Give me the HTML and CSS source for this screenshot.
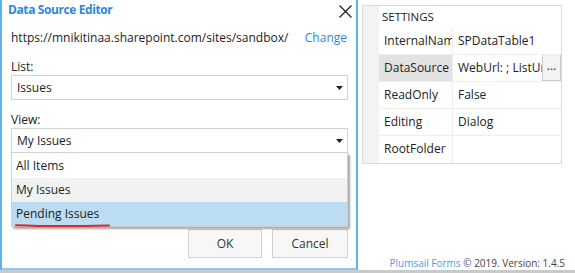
FILE: index.html
```html
<!DOCTYPE html>
<html>
<head>
<meta charset="utf-8">
<link rel="stylesheet" href="styles.css">
</head>
<body>
<div class="screen">
  <div class="main">
    <div class="dialog">
      <div class="titlebar">
        <span class="title">Data Source Editor</span>
        <svg class="close" width="13" height="13" viewBox="0 0 13 13"><path d="M0.5 0.5 L12.5 12.5 M12.5 0.5 L0.5 12.5" stroke="#222" stroke-width="1.3" fill="none"/></svg>
      </div>
      <div class="url-row">
        <span class="url">https://mnikitinaa.sharepoint.com/sites/sandbox/</span>
        <span class="change">Change</span>
      </div>
      <div class="field">
        <div class="label">List:</div>
        <div class="select"><span>Issues</span><svg class="caret" width="7" height="4" viewBox="0 0 7 4"><path d="M0 0 H7 L3.5 4 Z" fill="#222"/></svg></div>
      </div>
      <div class="field">
        <div class="label">View:</div>
        <div class="select"><span>My Issues</span><svg class="caret" width="7" height="4" viewBox="0 0 7 4"><path d="M0 0 H7 L3.5 4 Z" fill="#222"/></svg></div>
        <div class="dropdown">
          <div class="item">All Items</div>
          <div class="item hover">My Issues</div>
          <div class="item selected">Pending Issues</div>
          <svg class="underline" width="96" height="5" viewBox="0 0 96 5"><path d="M1 2.2 Q40 3.8 94 2.4" stroke="#e0262b" stroke-width="2" fill="none" stroke-linecap="round"/></svg>
        </div>
      </div>
      <div class="buttons">
        <div class="btn ok">OK</div>
        <div class="btn cancel">Cancel</div>
      </div>
    </div>
    <div class="side">
      <div class="settings">
        <div class="gutter"></div>
        <div class="grid">
          <div class="header">SETTINGS</div>
          <div class="row"><div class="name">InternalName</div><div class="value">SPDataTable1</div></div>
          <div class="row"><div class="name active">DataSource</div><div class="value"><span class="clip">WebUrl: ; ListUrl</span><span class="more">...</span></div></div>
          <div class="row"><div class="name">ReadOnly</div><div class="value">False</div></div>
          <div class="row"><div class="name">Editing</div><div class="value">Dialog</div></div>
          <div class="row last"><div class="name">RootFolder</div><div class="value"></div></div>
        </div>
      </div>
      <div class="footer"><span class="brand">Plumsail Forms</span> © 2019. Version: 1.4.5</div>
    </div>
  </div>
  <div class="bottom-bar"></div>
</div>
</body>
</html>
```

FILE: styles.css
```css
* { box-sizing: border-box; }
html, body { margin: 0; padding: 0; background: #fff; }
body {
  font-family: "Open Sans", "Noto Sans", sans-serif;
  font-size: 12px;
  color: #222;
  width: 575px;
  height: 273px;
  overflow: hidden;
}
.screen { display: flex; flex-direction: column; width: 575px; height: 273px; }
.main { display: flex; height: 270px; }
.bottom-bar { height: 3px; background: #c9c9c9; }

.dialog {
  width: 358px;
  flex: none;
  height: 270px;
  border-left: 2px solid #5fb0ee;
  border-right: 2px solid #5fb0ee;
  border-bottom: 2px solid #8cc6f2;
  display: flex;
  flex-direction: column;
  padding: 0 8px 0 9px;
}
.titlebar {
  height: 22px;
  display: flex;
  align-items: flex-start;
  justify-content: space-between;
  margin-left: -3px;
  margin-right: -6px;
}
.title {
  font-weight: bold;
  color: #2b88d8;
  line-height: 20px;
  font-size: 12px;
  letter-spacing: -0.4px;
}
.close { margin-top: 5px; margin-right: 2px; }

.url-row {
  margin-top: 7px;
  height: 18px;
  line-height: 18px;
  display: flex;
  justify-content: space-between;
  white-space: nowrap;
}
.change { color: #2b88d8; margin-right: 1px; }

.field { margin-top: 12px; display: flex; flex-direction: column; }
.label { line-height: 16px; height: 16px; }
.select {
  height: 25px;
  border: 1px solid #d3d3d3;
  display: flex;
  align-items: center;
  justify-content: space-between;
  padding: 0 4px 0 5px;
  line-height: 23px;
}
.select .caret { margin-top: 1px; }

.dropdown {
  position: relative;
  border: 1px solid #cfcfcf;
  border-top: none;
  padding-top: 1px;
  background: #fff;
  box-shadow: 2px 2px 2px rgba(0,0,0,0.35);
  height: 74px;
}
.item { height: 24px; line-height: 24px; padding-left: 4px; }
.item.hover { background: #f2f2f2; }
.item.selected { background: #bcdcf1; }
.underline { position: absolute; left: 3px; top: 70px; }

.buttons {
  margin-top: 2px;
  display: flex;
  justify-content: flex-end;
  gap: 10px;
}
.btn {
  height: 29px;
  line-height: 27px;
  border: 1px solid #d0d0d0;
  background: #f7f7f7;
  text-align: center;
  color: #333;
}
.ok { width: 74px; }
.cancel { width: 76px; }

.side {
  flex: 1;
  min-width: 0;
  display: flex;
  flex-direction: column;
  padding-left: 4px;
}
.settings {
  margin-top: 5px;
  width: 200px;
  height: 159px;
  border: 1px solid #dadada;
  display: flex;
}
.gutter { width: 16px; flex: none; background: #f3f3f3; }
.grid { flex: 1; min-width: 0; display: flex; flex-direction: column; }
.header {
  height: 22px;
  line-height: 22px;
  font-size: 11.5px;
  padding-left: 3px;
  color: #222;
}
.row {
  height: 27px;
  display: flex;
  border-bottom: 1px solid #eeeeee;
}
.row.last { border-bottom: none; }
.name {
  width: 74px;
  flex: none;
  border-right: 1px solid #eeeeee;
  line-height: 26px;
  padding-left: 5px;
  overflow: hidden;
  white-space: nowrap;
}
.name.active { background: #e2e2e2; }
.value {
  flex: 1;
  min-width: 0;
  display: flex;
  line-height: 26px;
  padding-left: 5px;
  overflow: hidden;
  white-space: nowrap;
}
.clip { flex: 1; min-width: 0; overflow: hidden; }
.more {
  flex: none;
  width: 19px;
  border: 1px solid #cccccc;
  background: #f3f3f3;
  text-align: center;
  line-height: 22px;
  margin-top: -1px;
  height: 27px;
}
.footer {
  margin-top: auto;
  height: 14px;
  line-height: 14px;
  font-size: 10px;
  text-align: right;
  padding-right: 10px;
  color: #444;
  white-space: nowrap;
}
.brand { color: #4a9de0; }
```
